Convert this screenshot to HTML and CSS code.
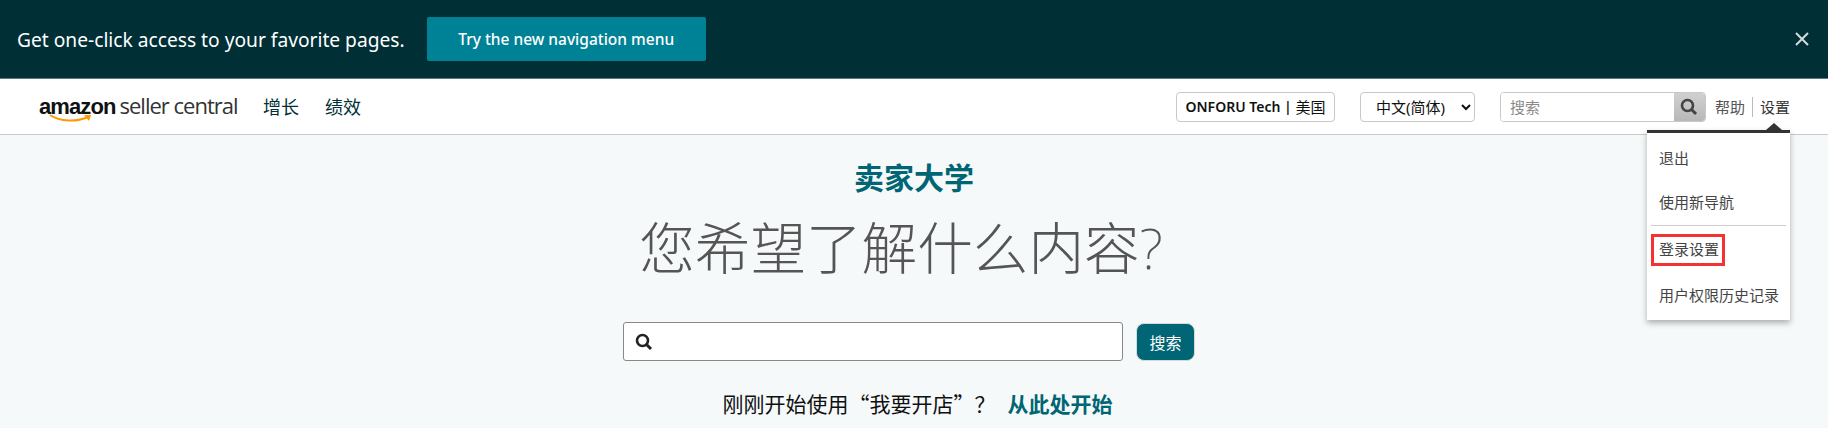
FILE: index.html
```html
<!DOCTYPE html>
<html lang="zh-CN">
<head>
    <title>Seller University</title>
    <link rel="stylesheet" href="styles.css">
</head>
<body>
    <div class="promo-bar">
        <span class="promo-text">Get one-click access to your favorite pages.</span>
        <button class="promo-button">Try the new navigation menu</button>
        <svg class="promo-close" width="14" height="14" viewBox="0 0 14 14">
            <path d="M1 1L13 13M13 1L1 13" stroke="#d5dbdb" stroke-width="2" fill="none"/>
        </svg>
    </div>

    <div class="top-nav">
        <div class="logo">
            <span class="logo-amazon">amazon</span>
            <span class="logo-seller">seller central</span>
            <svg class="logo-smile" width="44" height="9" viewBox="0 0 44 9">
                <path d="M1 1C11 8 28 8 39 3" stroke="#f90" stroke-width="2" fill="none"/>
                <path d="M35 1L42 1L40 7Z" fill="#f90"/>
            </svg>
        </div>
        <a class="nav-link">增长</a>
        <a class="nav-link">绩效</a>

        <div class="nav-right">
            <div class="account-box">ONFORU Tech | <span class="account-country">美国</span></div>
            <select class="lang-select">
                <option>中文(简体)</option>
            </select>
            <div class="nav-search">
                <input class="nav-search-input" type="text" placeholder="搜索">
                <div class="nav-search-btn">
                    <svg width="18" height="18" viewBox="0 0 18 18">
                        <circle cx="7.5" cy="7.5" r="5.5" stroke="#444" stroke-width="2.6" fill="none"/>
                        <path d="M11.5 11.5L16 16" stroke="#444" stroke-width="3" fill="none"/>
                    </svg>
                </div>
            </div>
            <a class="help-link">帮助</a>
            <a class="settings-link">设置</a>
        </div>

        <div class="settings-menu">
            <ul>
                <li>退出</li>
                <li>使用新导航</li>
                <li class="menu-divider"></li>
                <li class="menu-marked-row"><span class="menu-marked">登录设置</span></li>
                <li>用户权限历史记录</li>
            </ul>
        </div>
    </div>

    <div class="hero">
        <div class="hero-brand">卖家大学</div>
        <h1>您希望了解什么内容?</h1>
        <form class="hero-search">
            <div class="hero-input">
                <svg width="18" height="18" viewBox="0 0 18 18">
                    <circle cx="7.5" cy="7.5" r="5.5" stroke="#222" stroke-width="2.6" fill="none"/>
                    <path d="M11.5 11.5L16 16" stroke="#222" stroke-width="3" fill="none"/>
                </svg>
                <input type="text">
            </div>
            <button type="button">搜索</button>
        </form>
        <p class="hero-start">刚刚开始使用“我要开店”？<a>从此处开始</a></p>
    </div>
</body>
</html>
```

FILE: styles.css
```css
* {
    box-sizing: border-box;
}

body {
    font-family: "Noto Sans", "Noto Sans CJK SC", sans-serif;
    background-color: #f6f9f9;
    color: #0f1111;
    margin: 0;
    padding: 0;
    overflow: hidden;
}

.promo-bar {
    display: flex;
    align-items: center;
    height: 79px;
    padding: 0 19px 0 17px;
    background-color: #002f36;
    border-bottom: 1px solid #5f7a7e;
}

.promo-text {
    color: #fff;
    font-size: 19.2px;
}

.promo-button {
    width: 279px;
    height: 44px;
    margin-left: 22px;
    background-color: #008296;
    color: #fff;
    border: none;
    border-radius: 2px;
    font-family: inherit;
    font-size: 15.5px;
    font-weight: 500;
}

.promo-close {
    margin-left: auto;
}

.top-nav {
    position: relative;
    display: flex;
    align-items: center;
    height: 56px;
    padding-left: 39px;
    background-color: #fff;
    border-bottom: 1px solid #c8c8c8;
}

.logo {
    position: relative;
    display: flex;
    align-items: baseline;
    width: 200px;
    margin-right: 24px;
    margin-top: -4px;
    white-space: nowrap;
}

.logo-amazon {
    font-family: "Liberation Sans", sans-serif;
    font-weight: bold;
    font-size: 22px;
    letter-spacing: -0.9px;
    color: #111;
}

.logo-seller {
    font-family: "Open Sans", sans-serif;
    font-size: 22px;
    letter-spacing: -1px;
    margin-left: 4px;
    color: #333;
}

.logo-smile {
    position: absolute;
    left: 10px;
    top: 24px;
}

.nav-link {
    font-size: 18px;
    color: #002f36;
    margin-right: 26px;
    margin-top: -2px;
}

.nav-right {
    display: flex;
    align-items: center;
    margin-left: auto;
    padding-right: 38px;
}

.account-box {
    display: flex;
    align-items: center;
    justify-content: center;
    width: 159px;
    height: 30px;
    background-color: #fff;
    border: 1px solid #c8c8c8;
    border-radius: 4px;
    font-size: 14px;
    font-weight: 600;
    white-space: pre;
}

.account-country {
    font-weight: 400;
    font-size: 15px;
}

.lang-select {
    width: 115px;
    height: 30px;
    margin-left: 25px;
    padding-left: 11px;
    background-color: #fff;
    border: 1px solid #c8c8c8;
    border-radius: 4px;
    font-family: inherit;
    font-size: 15px;
    color: #0f1111;
}

.nav-search {
    display: flex;
    width: 206px;
    height: 30px;
    margin-left: 25px;
    margin-right: 9px;
    border: 1px solid #c8c8c8;
    border-radius: 4px;
    overflow: hidden;
}

.nav-search-input {
    flex: 1;
    min-width: 0;
    border: none;
    padding: 0 9px;
    font-family: inherit;
    font-size: 15px;
}

.nav-search-input::placeholder {
    color: #8a8a8a;
}

.nav-search-btn {
    display: flex;
    align-items: center;
    justify-content: center;
    width: 31px;
    background: linear-gradient(#d0d0d0, #b8b8b8);
}

.help-link {
    padding-right: 7px;
    border-right: 1px solid #bbb;
    font-size: 15px;
    line-height: 20px;
    color: #555;
}

.settings-link {
    padding-left: 7px;
    font-size: 15px;
    line-height: 20px;
    color: #333;
}

.settings-menu {
    position: absolute;
    top: 51px;
    right: 38px;
    width: 143px;
    height: 190px;
    background-color: #fff;
    border-top: 3px solid #333;
    box-shadow: 0 3px 6px rgba(0, 0, 0, 0.3);
    z-index: 10;
}

.settings-menu::before {
    content: "";
    position: absolute;
    top: -10px;
    right: 8px;
    border-left: 8px solid transparent;
    border-right: 8px solid transparent;
    border-bottom: 7px solid #333;
}

.settings-menu ul {
    list-style: none;
    margin: 0;
    padding: 3px 0 0;
}

.settings-menu li {
    height: 44px;
    padding-left: 12px;
    font-size: 15px;
    line-height: 44px;
    color: #444;
    white-space: nowrap;
}

.settings-menu .menu-divider {
    height: 1px;
    margin: 1px 4px 8px;
    padding: 0;
    background-color: #ccc;
}

.settings-menu .menu-marked-row {
    height: 39px;
}

.menu-marked {
    display: inline-block;
    width: 74px;
    height: 32px;
    margin: 0 0 0 -8px;
    padding-left: 5px;
    border: 3px solid #f33333;
    line-height: 25px;
    vertical-align: top;
}

.hero {
    display: flex;
    flex-direction: column;
    align-items: center;
    padding-top: 23px;
}

.hero-brand {
    font-size: 30px;
    line-height: 40px;
    font-weight: bold;
    color: #006574;
}

h1 {
    margin: 12px 26px 0 0;
    font-size: 55.6px;
    line-height: 76px;
    font-weight: 200;
    color: #555;
}

.hero-search {
    display: flex;
    align-items: center;
    margin-top: 36px;
    margin-left: -10px;
}

.hero-input {
    display: flex;
    align-items: center;
    width: 500px;
    height: 39px;
    padding-left: 11px;
    background-color: #fff;
    border: 1px solid #888;
    border-radius: 3px;
}

.hero-input input {
    flex: 1;
    height: 100%;
    border: none;
    background: none;
    outline: none;
}

.hero-search button {
    width: 59px;
    height: 38px;
    margin-left: 13px;
    background-color: #006574;
    color: #fff;
    border: 1px solid #d5dbdb;
    border-radius: 8px;
    font-family: inherit;
    font-size: 16px;
}

.hero-start {
    margin: 27px 0 0;
    padding-left: 7px;
    font-family: "Noto Sans CJK SC", sans-serif;
    font-size: 21px;
    line-height: 30px;
    color: #0f1111;
}

.hero-start a {
    margin-left: 12px;
    font-weight: bold;
    color: #006574;
}
```
